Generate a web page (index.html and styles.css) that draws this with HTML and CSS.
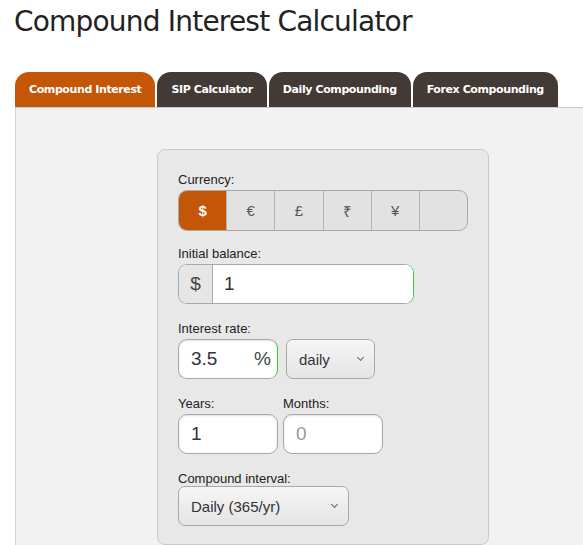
FILE: index.html
```html
<!DOCTYPE html>
<html lang="en">
<head>
  <meta charset="UTF-8">
  <title>Compound Interest Calculator</title>
  <link rel="stylesheet" href="styles.css">
</head>
<body>
  <h1 class="page-title">Compound Interest Calculator</h1>

  <nav class="tabs">
    <a class="tab active">Compound Interest</a>
    <a class="tab">SIP Calculator</a>
    <a class="tab">Daily Compounding</a>
    <a class="tab">Forex Compounding</a>
  </nav>

  <div class="panel">
    <div class="card">
      <div class="field currency">
        <label>Currency:</label>
        <div class="currency-group">
          <span class="cur active">$</span>
          <span class="cur">€</span>
          <span class="cur">£</span>
          <span class="cur">₹</span>
          <span class="cur">¥</span>
          <span class="cur"></span>
        </div>
      </div>

      <div class="field">
        <label>Initial balance:</label>
        <div class="input-group">
          <span class="prefix">$</span>
          <span class="input valid">1</span>
        </div>
      </div>

      <div class="field">
        <label>Interest rate:</label>
        <div class="row">
          <span class="input small valid">3.5<span class="suffix">%</span></span>
          <span class="select rate">daily<span class="chev"></span></span>
        </div>
      </div>

      <div class="row period">
        <div class="field">
          <label>Years:</label>
          <span class="input small">1</span>
        </div>
        <div class="field">
          <label>Months:</label>
          <span class="input small placeholder">0</span>
        </div>
      </div>

      <div class="field tight">
        <label>Compound interval:</label>
        <span class="select interval">Daily (365/yr)<span class="chev"></span></span>
      </div>
    </div>
  </div>
</body>
</html>
```

FILE: styles.css
```css
* {
  margin: 0;
  padding: 0;
  box-sizing: border-box;
}

body {
  font-family: 'Liberation Sans', Arial, sans-serif;
  background: #fff;
  color: #222;
  overflow: hidden;
}

.page-title {
  font-family: 'DejaVu Sans', Tahoma, sans-serif;
  font-weight: normal;
  font-size: 28px;
  letter-spacing: -0.8px;
  color: #222;
  margin: 5px 0 0 14px;
  line-height: 34px;
}

.tabs {
  display: flex;
  gap: 2px;
  margin: 33px 0 0 15px;
}

.tab {
  font-family: 'DejaVu Sans', Tahoma, sans-serif;
  font-weight: bold;
  font-size: 11px;
  letter-spacing: -0.4px;
  color: #fff;
  background: #433a36;
  height: 35px;
  padding: 0 14px;
  display: flex;
  align-items: center;
  border-radius: 14px 14px 0 0;
}

.tab.active {
  background: #c45607;
}

.panel {
  margin-left: 15px;
  background: #f2f2f2;
  border-top: 1px solid #c8c8c8;
  border-left: 1px solid #d4d4d4;
  height: 500px;
  padding: 41px 0 0 141px;
}

.card {
  width: 332px;
  height: 396px;
  background: #e8e8e8;
  border: 1px solid #cacaca;
  border-radius: 8px;
  padding: 22px 20px 0 20px;
  display: flex;
  flex-direction: column;
  gap: 17px;
}

.field {
  display: flex;
  flex-direction: column;
  gap: 3px;
}

.field.currency {
  margin-bottom: -2px;
}

.field.tight {
  gap: 0;
}

.field label {
  font-size: 13px;
  line-height: 15px;
  color: #222;
}

.row {
  display: flex;
  gap: 7px;
}

.row.period {
  gap: 5px;
}

.currency-group {
  display: flex;
  width: 290px;
  height: 41px;
  border: 1px solid #a8a8a8;
  border-radius: 9px;
  overflow: hidden;
  background: #e2e2e2;
}

.cur {
  flex: 1;
  display: flex;
  align-items: center;
  justify-content: center;
  font-size: 15px;
  color: #555;
  border-left: 1px solid #b4b4b4;
}

.cur:first-child {
  border-left: none;
}

.cur.active {
  background: #c45607;
  color: #fff;
  font-weight: bold;
}

.input-group {
  display: flex;
  width: 236px;
  height: 40px;
  border: 1px solid #a8a8a8;
  border-right-color: #3ccb3c;
  border-radius: 9px;
  overflow: hidden;
  background: #fff;
}

.prefix {
  width: 34px;
  background: #e6e6e6;
  border-right: 1px solid #aaa;
  display: flex;
  align-items: center;
  justify-content: center;
  font-size: 19px;
  color: #444;
}

.input {
  display: flex;
  align-items: center;
  flex: 1;
  padding-left: 11px;
  font-size: 19px;
  color: #333;
  background: #fff;
  box-shadow: inset 0 1px 2px rgba(0, 0, 0, 0.12);
}

.input-group .input {
  box-shadow: none;
}

.input.small {
  flex: none;
  width: 100px;
  height: 40px;
  border: 1px solid #a8a8a8;
  border-radius: 9px;
  justify-content: space-between;
  padding: 0 6px 0 12px;
}

.input.valid {
  border-right-color: #3ccb3c;
}

.input.placeholder {
  color: #999;
}

.suffix {
  color: #444;
}

.select {
  display: flex;
  align-items: center;
  justify-content: space-between;
  height: 40px;
  border: 1px solid #a8a8a8;
  border-radius: 7px;
  background: linear-gradient(#f6f6f6, #e4e4e4);
  font-size: 15px;
  color: #333;
  padding: 0 11px 0 12px;
}

.select.rate {
  width: 89px;
  margin-left: 1px;
}

.select.interval {
  width: 171px;
}

.chev {
  width: 5px;
  height: 5px;
  border-right: 1px solid #666;
  border-bottom: 1px solid #666;
  transform: rotate(45deg);
  margin-top: -3px;
}
```
